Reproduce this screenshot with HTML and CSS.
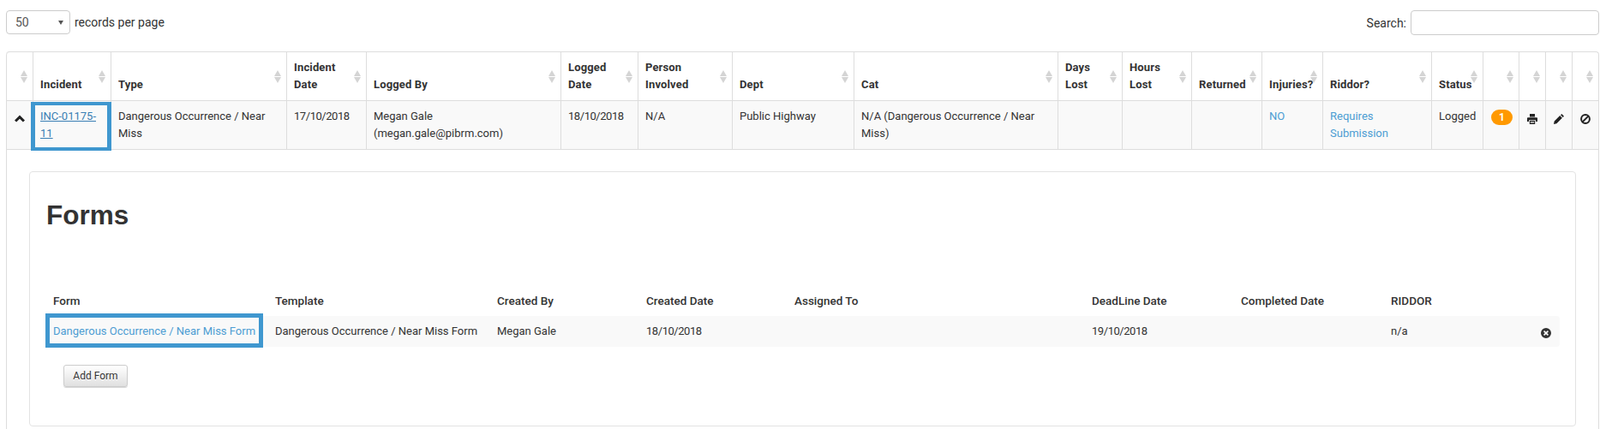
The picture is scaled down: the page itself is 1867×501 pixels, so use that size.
FILE: index.html
```html
<!DOCTYPE html>
<html lang="en">
<head>
    <meta charset="UTF-8">
    <title>Incidents</title>
    <link rel="stylesheet" href="styles.css">
</head>
<body>
    <div class="toolbar">
        <label class="length">
            <span class="select-wrap"><select class="length-select"><option>50</option></select></span>
            records per page
        </label>
        <label class="search">Search: <input type="text" class="search-input"></label>
    </div>

    <table class="grid">
        <colgroup>
            <col class="c-toggle"><col class="c-incident"><col class="c-type"><col class="c-date"><col class="c-by">
            <col class="c-logged"><col class="c-person"><col class="c-dept"><col class="c-cat"><col class="c-days">
            <col class="c-hours"><col class="c-returned"><col class="c-injuries"><col class="c-riddor"><col class="c-status">
            <col class="c-badge"><col class="c-icon"><col class="c-icon"><col class="c-icon">
        </colgroup>
        <thead>
            <tr>
                <th></th>
                <th>Incident</th>
                <th>Type</th>
                <th>Incident Date</th>
                <th>Logged By</th>
                <th>Logged Date</th>
                <th>Person Involved</th>
                <th>Dept</th>
                <th>Cat</th>
                <th>Days<br>Lost</th>
                <th>Hours<br>Lost</th>
                <th>Returned</th>
                <th>Injuries?</th>
                <th>Riddor?</th>
                <th>Status</th>
                <th></th>
                <th></th>
                <th></th>
                <th></th>
            </tr>
        </thead>
        <tbody>
            <tr class="row-open">
                <td class="cell-icon">
                    <svg class="icon icon-chevron" viewBox="0 0 12 12"><path d="M6 1.6 12 7.4 9.9 9.5 6 5.7 2.1 9.5 0 7.4Z"/></svg>
                </td>
                <td class="marked"><a class="inc-link" href="#">INC-01175-11</a><span class="mark mark-inc"></span></td>
                <td>Dangerous Occurrence / Near Miss</td>
                <td class="date">17/10/2018</td>
                <td>Megan Gale (megan.gale@pibrm.com)</td>
                <td class="date">18/10/2018</td>
                <td>N/A</td>
                <td>Public Highway</td>
                <td>N/A (Dangerous Occurrence / Near Miss)</td>
                <td></td>
                <td></td>
                <td></td>
                <td><a href="#">NO</a></td>
                <td><a href="#">Requires Submission</a></td>
                <td>Logged</td>
                <td><span class="badge">1</span></td>
                <td class="cell-icon">
                    <svg class="icon" viewBox="0 0 12 12"><path fill-rule="evenodd" d="M3 0H9V3.5H3ZM.9 4.2H11.1Q12 4.2 12 5.1V9H10V7.2H2V9H0V5.1Q0 4.2.9 4.2ZM2.8 8H9.2V12H2.8ZM3.8 9V9.8H8.2V9ZM3.8 10.4V11.1H8.2V10.4Z"/></svg>
                </td>
                <td class="cell-icon">
                    <svg class="icon" viewBox="0 0 12 12"><path d="M9.3 0 12 2.7 10.7 4 8 1.3ZM7.2 2.1 9.9 4.8 3.4 11.3 0 12 .7 8.6Z"/></svg>
                </td>
                <td class="cell-icon">
                    <svg class="icon" viewBox="0 0 12 12"><circle cx="6" cy="6" r="4.9" fill="none" stroke="#222" stroke-width="2"/><path d="M2.6 9.4 9.4 2.6" stroke="#222" stroke-width="2"/></svg>
                </td>
            </tr>
            <tr>
                <td class="detail" colspan="19">
                    <div class="card">
                        <h2 class="card-title">Forms</h2>
                        <table class="forms">
                            <colgroup>
                                <col class="f-form"><col class="f-template"><col class="f-by"><col class="f-created">
                                <col class="f-assigned"><col class="f-deadline"><col class="f-completed"><col class="f-riddor">
                            </colgroup>
                            <thead>
                                <tr>
                                    <th>Form</th>
                                    <th>Template</th>
                                    <th>Created By</th>
                                    <th>Created Date</th>
                                    <th>Assigned To</th>
                                    <th>DeadLine Date</th>
                                    <th>Completed Date</th>
                                    <th>RIDDOR</th>
                                </tr>
                            </thead>
                            <tbody>
                                <tr>
                                    <td class="marked"><a href="#">Dangerous Occurrence / Near Miss Form</a><span class="mark mark-form"></span></td>
                                    <td>Dangerous Occurrence / Near Miss Form</td>
                                    <td>Megan Gale</td>
                                    <td class="date">18/10/2018</td>
                                    <td></td>
                                    <td class="date">19/10/2018</td>
                                    <td></td>
                                    <td class="cell-last">n/a
                                        <svg class="icon icon-remove" viewBox="0 0 12 12"><path fill-rule="evenodd" d="M6 0A6 6 0 1 1 6 12 6 6 0 1 1 6 0ZM4.2 3 3 4.2 4.8 6 3 7.8 4.2 9 6 7.2 7.8 9 9 7.8 7.2 6 9 4.2 7.8 3 6 4.8Z"/></svg>
                                    </td>
                                </tr>
                            </tbody>
                        </table>
                        <button class="btn-add" type="button">Add Form</button>
                    </div>
                </td>
            </tr>
        </tbody>
    </table>
</body>
</html>
```

FILE: styles.css
```css
html, body {
    height: 501px;
    overflow: hidden;
}
body {
    margin: 0;
    padding: 0 1px 0 7px;
    font-family: Roboto, "Liberation Sans", sans-serif;
    font-size: 13px;
    line-height: 20px;
    color: #333;
    background: #fff;
}
a {
    color: #4d9dd3;
    text-decoration: none;
}

/* top bar */
.toolbar {
    display: flex;
    justify-content: space-between;
    align-items: flex-start;
    height: 60px;
    padding-top: 12px;
    box-sizing: border-box;
    font-size: 14px;
}
.length {
    display: flex;
    align-items: center;
    gap: 5px;
    height: 28px;
}
.select-wrap {
    position: relative;
    display: block;
    height: 28px;
}
.select-wrap::after {
    content: "";
    position: absolute;
    top: 12px;
    right: 8px;
    border-left: 3px solid transparent;
    border-right: 3px solid transparent;
    border-top: 5px solid #555;
}
.length-select {
    display: block;
    width: 75px;
    height: 28px;
    padding: 0 10px;
    font-family: Roboto, sans-serif;
    font-size: 14px;
    color: #555;
    background: #fff;
    border: 1px solid #ccc;
    border-radius: 4px;
    appearance: none;
}
.search {
    display: flex;
    align-items: center;
    gap: 5px;
    height: 29px;
}
.search-input {
    width: 220px;
    height: 29px;
    padding: 0 6px;
    box-sizing: border-box;
    background: #fff;
    border: 1px solid #ccc;
    border-radius: 4px;
}

/* main table */
.grid {
    width: 1859px;
    table-layout: fixed;
    border-collapse: separate;
    border-spacing: 0;
    border-top: 1px solid #ddd;
    border-right: 1px solid #ddd;
    border-radius: 4px 4px 0 0;
}
.c-toggle { width: 31px; }
.c-incident { width: 91px; }
.c-type { width: 205px; }
.c-date { width: 93px; }
.c-by { width: 227px; }
.c-logged { width: 90px; }
.c-person { width: 110px; }
.c-dept { width: 142px; }
.c-cat { width: 238px; }
.c-days { width: 75px; }
.c-hours { width: 81px; }
.c-returned { width: 82px; }
.c-injuries { width: 71px; }
.c-riddor { width: 127px; }
.c-status { width: 60px; }
.c-badge { width: 42px; }
.c-icon { width: 31px; }

.grid > thead > tr > th {
    position: relative;
    height: 55px;
    box-sizing: border-box;
    padding: 8px;
    text-align: left;
    vertical-align: bottom;
    font-weight: 700;
    letter-spacing: 0.15px;
    border-left: 1px solid #ddd;
    border-bottom: 1px solid #ddd;
}
.grid > thead > tr > th:first-child {
    border-top-left-radius: 4px;
}
/* sort arrows */
.grid > thead > tr > th::before,
.grid > thead > tr > th::after {
    content: "";
    position: absolute;
    right: 6px;
    border-left: 4.5px solid transparent;
    border-right: 4.5px solid transparent;
}
.grid > thead > tr > th::before {
    top: 21px;
    border-bottom: 7px solid #d4d4d4;
}
.grid > thead > tr > th::after {
    top: 29px;
    border-top: 7px solid #d4d4d4;
}

.row-open > td {
    height: 57px;
    box-sizing: border-box;
    padding: 8px;
    vertical-align: top;
    background: #f9f9f9;
    border-left: 1px solid #ddd;
    border-bottom: 1px solid #ddd;
}
.row-open > .cell-icon {
    padding: 15px 0 0;
    text-align: center;
}
.date {
    letter-spacing: -0.45px;
}
.inc-link {
    color: #3a7fb4;
    text-decoration: underline;
}
.marked {
    position: relative;
}
.mark {
    position: absolute;
    box-sizing: border-box;
    border: solid #3f97cf;
    pointer-events: none;
}
.mark-inc {
    top: 1px;
    left: -3px;
    right: -1px;
    bottom: -2px;
    border-width: 4px 5px;
}
.mark-form {
    top: -3px;
    left: -1px;
    width: 254px;
    bottom: -1px;
    border-width: 5px;
}
.badge {
    display: block;
    width: 25px;
    height: 18px;
    margin: 2px 0 0 1px;
    font-size: 12px;
    font-weight: 700;
    line-height: 18px;
    text-align: center;
    color: #fff;
    background: #f90;
    border-radius: 9px;
}
.icon {
    display: inline-block;
    width: 12px;
    height: 12px;
    fill: #222;
    vertical-align: top;
}

/* expanded row */
.detail {
    padding: 25px 26px 40px 26px;
    border-left: 1px solid #ddd;
}
.card {
    height: 298px;
    box-sizing: border-box;
    padding: 20px 19px;
    background: #fff;
    border: 1px solid #e3e3e3;
    border-radius: 4px;
}
.card-title {
    margin: 13px 0 65px;
    font-family: "Liberation Sans", Arial, sans-serif;
    font-size: 31.5px;
    font-weight: 700;
    line-height: 34px;
    color: #333;
}
.forms {
    width: 1766px;
    table-layout: fixed;
    border-collapse: collapse;
}
.f-form, .f-template { width: 259px; }
.f-by { width: 174px; }
.f-created { width: 173px; }
.f-assigned { width: 347px; }
.f-deadline { width: 174px; }
.f-completed { width: 175px; }
.f-riddor { width: 205px; }
.forms th {
    padding: 8px;
    text-align: left;
    font-size: 13.5px;
    font-weight: 500;
    color: #333;
}
.forms td {
    padding: 8px;
    background: #f9f9f9;
}
.cell-last {
    position: relative;
    border-radius: 0 4px 4px 0;
}
.icon-remove {
    position: absolute;
    right: 10px;
    top: 14px;
    fill: #333;
}
.btn-add {
    display: block;
    width: 75px;
    height: 26px;
    margin: 21px 0 0 20px;
    padding: 0;
    font-family: Roboto, sans-serif;
    font-size: 12px;
    color: #333;
    text-shadow: 0 1px 0 #fff;
    background: linear-gradient(#fff, #e0e0e0);
    border: 1px solid #ccc;
    border-radius: 3px;
    box-shadow: 0 1px 0 rgba(0, 0, 0, 0.15);
}
```
